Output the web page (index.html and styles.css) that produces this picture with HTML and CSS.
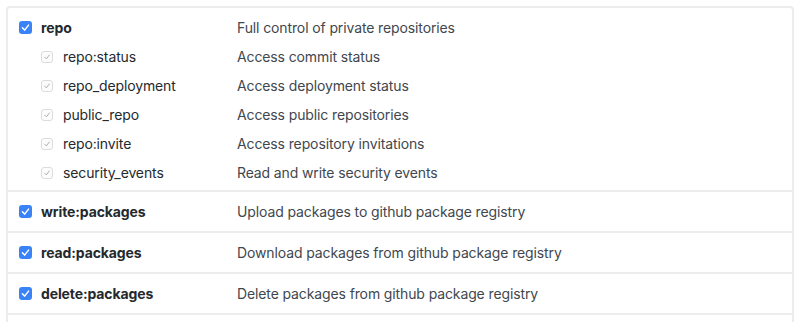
FILE: index.html
```html
<!DOCTYPE html>
<html lang="en">
<head>
    <meta charset="UTF-8">
    <title>Scopes</title>
    <link rel="stylesheet" href="styles.css">
</head>
<body>
    <div class="scopes">
        <div class="scope-group">
            <div class="scope-row">
                <label class="scope-name main"><span class="check on"><svg viewBox="0 0 13 13"><path d="M3.4 6.8l2.2 2.3 4-5" /></svg></span>repo</label>
                <span class="scope-desc">Full control of private repositories</span>
            </div>
            <div class="scope-row sub">
                <label class="scope-name"><span class="check off"><svg viewBox="0 0 12 12"><path d="M3.3 6.2l1.9 2 3.6-4.6" /></svg></span>repo:status</label>
                <span class="scope-desc">Access commit status</span>
            </div>
            <div class="scope-row sub">
                <label class="scope-name"><span class="check off"><svg viewBox="0 0 12 12"><path d="M3.3 6.2l1.9 2 3.6-4.6" /></svg></span>repo_deployment</label>
                <span class="scope-desc">Access deployment status</span>
            </div>
            <div class="scope-row sub">
                <label class="scope-name"><span class="check off"><svg viewBox="0 0 12 12"><path d="M3.3 6.2l1.9 2 3.6-4.6" /></svg></span>public_repo</label>
                <span class="scope-desc">Access public repositories</span>
            </div>
            <div class="scope-row sub">
                <label class="scope-name"><span class="check off"><svg viewBox="0 0 12 12"><path d="M3.3 6.2l1.9 2 3.6-4.6" /></svg></span>repo:invite</label>
                <span class="scope-desc">Access repository invitations</span>
            </div>
            <div class="scope-row sub">
                <label class="scope-name"><span class="check off"><svg viewBox="0 0 12 12"><path d="M3.3 6.2l1.9 2 3.6-4.6" /></svg></span>security_events</label>
                <span class="scope-desc">Read and write security events</span>
            </div>
        </div>

        <div class="scope-group single">
            <div class="scope-row">
                <label class="scope-name main"><span class="check on"><svg viewBox="0 0 13 13"><path d="M3.4 6.8l2.2 2.3 4-5" /></svg></span>write:packages</label>
                <span class="scope-desc">Upload packages to github package registry</span>
            </div>
        </div>

        <div class="scope-group single">
            <div class="scope-row">
                <label class="scope-name main"><span class="check on"><svg viewBox="0 0 13 13"><path d="M3.4 6.8l2.2 2.3 4-5" /></svg></span>read:packages</label>
                <span class="scope-desc">Download packages from github package registry</span>
            </div>
        </div>

        <div class="scope-group single">
            <div class="scope-row">
                <label class="scope-name main"><span class="check on"><svg viewBox="0 0 13 13"><path d="M3.4 6.8l2.2 2.3 4-5" /></svg></span>delete:packages</label>
                <span class="scope-desc">Delete packages from github package registry</span>
            </div>
        </div>

        <div class="scope-rest"></div>
    </div>
</body>
</html>
```

FILE: styles.css
```css
* {
    margin: 0;
    padding: 0;
    box-sizing: border-box;
}

body {
    font-family: Inter, "Liberation Sans", sans-serif;
    font-size: 14px;
    letter-spacing: -0.12px;
    color: #24292e;
    background: #fff;
    overflow: hidden;
}

.scopes {
    margin: 6px 6px 0;
    border: 2px solid #ececec;
    border-bottom: none;
    border-radius: 4px 4px 0 0;
}

.scope-group {
    padding: 5px 0 3px 11px;
    border-bottom: 2px solid #ececec;
}

.scope-group.single {
    padding: 0 0 0 11px;
    height: 41px;
}

.scope-group.single .scope-row {
    line-height: 39px;
}

.scope-rest {
    height: 8px;
}

.scope-row {
    display: flex;
    align-items: center;
    line-height: 29px;
}

.scope-name {
    display: flex;
    align-items: center;
    width: 218px;
    flex-shrink: 0;
}

.scope-name.main {
    font-weight: 700;
}

.scope-row.sub .scope-name {
    padding-left: 22px;
}

.scope-desc {
    color: #41474e;
}

.check {
    display: inline-block;
    flex-shrink: 0;
    margin-right: 9px;
    border-radius: 3px;
}

.check svg {
    display: block;
    width: 100%;
    height: 100%;
    fill: none;
    stroke-linecap: round;
    stroke-linejoin: round;
}

.check.on {
    width: 13px;
    height: 13px;
    background: #3a82f7;
}

.check.on svg {
    stroke: #fff;
    stroke-width: 1.5;
}

.check.off {
    width: 12px;
    height: 12px;
    margin-right: 10px;
    border: 1px solid #dcdcdc;
    background: #fcfcfc;
}

.check.off svg {
    stroke: #a6a6a6;
    stroke-width: 1.1;
}
```
